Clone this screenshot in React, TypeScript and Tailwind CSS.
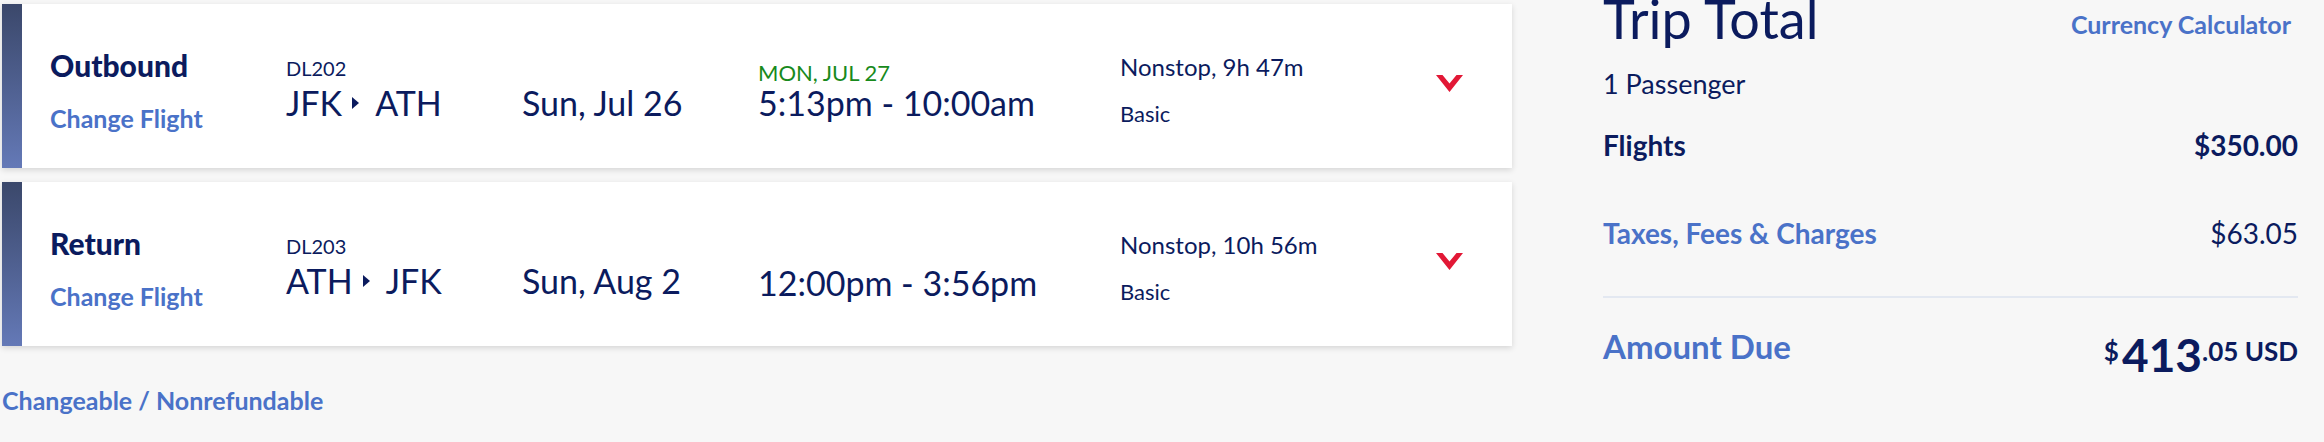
import React from 'react'

type Flight = {
  label: string
  number: string
  from: string
  to: string
  date: string
  nextDay?: string
  time: string
  duration: string
  fare: string
}

const FLIGHTS: Flight[] = [
  {
    label: 'Outbound',
    number: 'DL202',
    from: 'JFK',
    to: 'ATH',
    date: 'Sun, Jul 26',
    nextDay: 'MON, JUL 27',
    time: '5:13pm - 10:00am',
    duration: 'Nonstop, 9h 47m',
    fare: 'Basic',
  },
  {
    label: 'Return',
    number: 'DL203',
    from: 'ATH',
    to: 'JFK',
    date: 'Sun, Aug 2',
    time: '12:00pm - 3:56pm',
    duration: 'Nonstop, 10h 56m',
    fare: 'Basic',
  },
]

function Chevron() {
  return (
    <svg width="27" height="17" viewBox="0 0 27 17">
      <path d="M0 0 L6.5 0 L13.5 8.5 L20.5 0 L27 0 L13.5 17 Z" fill="#e21836" />
    </svg>
  )
}

function Arrow() {
  return (
    <svg width="7" height="12" viewBox="0 0 7 12" className="ml-[10px] mr-[16px]">
      <path d="M0 0 L7 6 L0 12 Z" fill="#0b1b5e" />
    </svg>
  )
}

function FlightCard({ flight }: { flight: Flight }) {
  return (
    <div className="flex h-[164px] bg-white shadow-[0_2px_6px_rgba(0,0,0,0.14)]">
      <div className="w-[20px] shrink-0 bg-linear-to-b from-[#3b486b] to-[#6479b7]" />

      <div className="w-[264px] shrink-0 pl-[28px] pt-[47px]">
        <div className="text-[30px] leading-[29px] font-black text-[#0b1b5e]">{flight.label}</div>
        <div className="mt-[26px] text-[25px] leading-[25px] font-bold text-[#4a72c8]">Change Flight</div>
      </div>

      <div className="w-[236px] shrink-0 pt-[54px]">
        <div className="text-[20px] leading-[20px] text-[#0b1b5e]">{flight.number}</div>
        <div className="mt-[8px] flex items-center text-[34px] leading-[34px] text-[#0b1b5e]">
          <span>{flight.from}</span>
          <Arrow />
          <span>{flight.to}</span>
        </div>
      </div>

      <div className="w-[236px] shrink-0 pt-[82px] text-[34px] leading-[34px] text-[#0b1b5e]">
        {flight.date}
      </div>

      <div className={flight.nextDay ? 'w-[362px] shrink-0 pt-[58px]' : 'w-[362px] shrink-0 pt-[84px]'}>
        {flight.nextDay && (
          <div className="mb-[2px] text-[22px] leading-[22px] text-[#188a1c]">{flight.nextDay}</div>
        )}
        <div className="text-[34px] leading-[34px] text-[#0b1b5e]">{flight.time}</div>
      </div>

      <div className="w-[316px] shrink-0 pt-[51px] text-[#0b1b5e]">
        <div className="text-[24px] leading-[24px]">{flight.duration}</div>
        <div className="mt-[24px] text-[22px] leading-[22px]">{flight.fare}</div>
      </div>

      <div className="pt-[71px]">
        <Chevron />
      </div>
    </div>
  )
}

export default function App() {
  return (
    <div className="h-[442px] w-full overflow-hidden bg-[#f7f7f7] font-[Lato,sans-serif]">
      <div className="flex items-start">
        <div className="ml-[2px] w-[1510px] shrink-0 pt-[4px]">
          <div className="flex flex-col gap-[14px]">
            {FLIGHTS.map(f => (
              <FlightCard key={f.number} flight={f} />
            ))}
          </div>
          <div className="mt-[42px] text-[25px] leading-[25px] font-bold text-[#4a72c8]">
            Changeable / Nonrefundable
          </div>
        </div>

        <div className="ml-[91px] w-[695px] shrink-0 text-[#0b1b5e]">
          <div className="flex items-start justify-between">
            <div className="text-[54px] leading-[38px]">Trip Total</div>
            <div className="mr-[7px] mt-[12px] text-[25px] leading-[24px] font-bold text-[#4a72c8]">
              Currency Calculator
            </div>
          </div>
          <div className="mt-[32px] text-[27px] leading-[27px]">1 Passenger</div>
          <div className="mt-[34px] flex justify-between text-[28px] leading-[28px] font-bold">
            <span>Flights</span>
            <span>$350.00</span>
          </div>
          <div className="mt-[60px] flex justify-between text-[28px] leading-[28px]">
            <span className="font-bold text-[#4a72c8]">Taxes, Fees &amp; Charges</span>
            <span>$63.05</span>
          </div>
          <div className="mt-[49px] h-[2px] bg-[#e3e8f1]" />
          <div className="mt-[30px] flex items-start justify-between">
            <span className="mt-[2px] text-[33px] leading-[33px] font-bold text-[#4a72c8]">Amount Due</span>
            <div className="flex items-start font-bold">
              <span className="mr-[3px] mt-[10px] text-[26px] leading-[26px]">$</span>
              <span className="mt-[4px] text-[46px] leading-[46px]">413</span>
              <span className="mt-[10px] text-[26px] leading-[26px]">.05 USD</span>
            </div>
          </div>
        </div>
      </div>
    </div>
  )
}
